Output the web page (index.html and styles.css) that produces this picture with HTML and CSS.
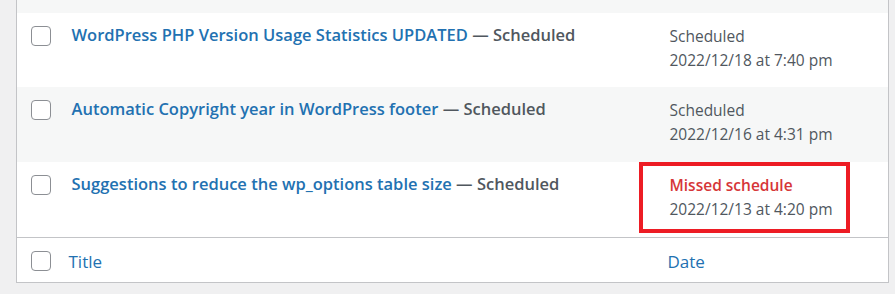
FILE: index.html
```html
<!DOCTYPE html>
<html lang="en">
<head>
    <meta charset="UTF-8">
    <title>Posts</title>
    <link rel="stylesheet" href="styles.css">
</head>
<body>
    <div class="wrap">
        <table class="posts-table">
            <colgroup>
                <col class="col-check">
                <col class="col-title">
                <col class="col-date">
            </colgroup>
            <tbody>
                <tr class="row stub"><td></td><td></td><td></td></tr>
                <tr class="row">
                    <td class="check-cell"><span class="checkbox"></span></td>
                    <td class="title-cell"><a href="#" class="row-title">WordPress PHP Version Usage Statistics UPDATED</a> <span class="post-state">— Scheduled</span></td>
                    <td class="date-cell">Scheduled<br>2022/12/18 at 7:40 pm</td>
                </tr>
                <tr class="row alt tall">
                    <td class="check-cell"><span class="checkbox"></span></td>
                    <td class="title-cell"><a href="#" class="row-title">Automatic Copyright year in WordPress footer</a> <span class="post-state">— Scheduled</span></td>
                    <td class="date-cell">Scheduled<br>2022/12/16 at 4:31 pm</td>
                </tr>
                <tr class="row tall">
                    <td class="check-cell"><span class="checkbox"></span></td>
                    <td class="title-cell"><a href="#" class="row-title">Suggestions to reduce the wp_options table size</a> <span class="post-state">— Scheduled</span></td>
                    <td class="date-cell missed-cell">
                        <span class="missed">Missed schedule</span><br>2022/12/13 at 4:20 pm
                        <span class="highlight"></span>
                    </td>
                </tr>
            </tbody>
            <tfoot>
                <tr class="foot-row">
                    <td class="check-cell"><span class="checkbox"></span></td>
                    <td class="foot-cell"><a href="#">Title</a></td>
                    <td class="foot-cell foot-date"><a href="#">Date</a></td>
                </tr>
            </tfoot>
        </table>
    </div>
</body>
</html>
```

FILE: styles.css
```css
body {
    margin: 0;
    background-color: #f0f0f1;
    font-family: "Open Sans", "Noto Sans", sans-serif;
    color: #50575e;
}
.wrap {
    padding: 0 6px 0 16px;
}
.posts-table {
    width: 100%;
    border-collapse: collapse;
    table-layout: fixed;
    background-color: #fff;
    border: 1px solid #c3c4c7;
    border-top: none;
}
.col-check {
    width: 44px;
}
.col-date {
    width: 229px;
}
.row {
    height: 74px;
}
.row.tall {
    height: 75px;
}
.row td {
    vertical-align: top;
    padding: 0;
}
.row.stub td,
.row.alt td {
    background-color: #f6f7f7;
}
.row.stub {
    height: 13px;
}
.check-cell {
    padding: 0;
}
.checkbox {
    display: block;
    box-sizing: border-box;
    width: 20px;
    height: 20px;
    margin: 13px 0 0 14px;
    border: 1px solid #8c8f94;
    border-radius: 4px;
    background-color: #fff;
}
.title-cell {
    font-size: 16.5px;
    font-weight: 600;
    line-height: 24px;
}
.row .title-cell {
    padding: 10px 10px 0 11px;
}
.row-title {
    color: #2271b1;
    text-decoration: none;
}
.post-state {
    color: #50575e;
}
.row .date-cell {
    font-size: 15.5px;
    line-height: 24px;
    padding: 11px 10px 0 10px;
}
.missed-cell {
    position: relative;
}
.missed {
    color: #d63638;
    font-weight: 600;
}
.highlight {
    position: absolute;
    left: -21px;
    top: 0;
    width: 211px;
    height: 71px;
    box-sizing: border-box;
    border: 4px solid #ed1c24;
}
.foot-row {
    height: 45px;
}
.foot-row td {
    border-top: 1px solid #c3c4c7;
    padding: 0;
    vertical-align: top;
}
.foot-row .checkbox {
    margin-top: 13px;
}
.foot-row .foot-cell {
    font-size: 17px;
    line-height: 24px;
    padding: 12px 8px 0 8px;
}
.foot-cell a {
    color: #2271b1;
    text-decoration: none;
}
```
